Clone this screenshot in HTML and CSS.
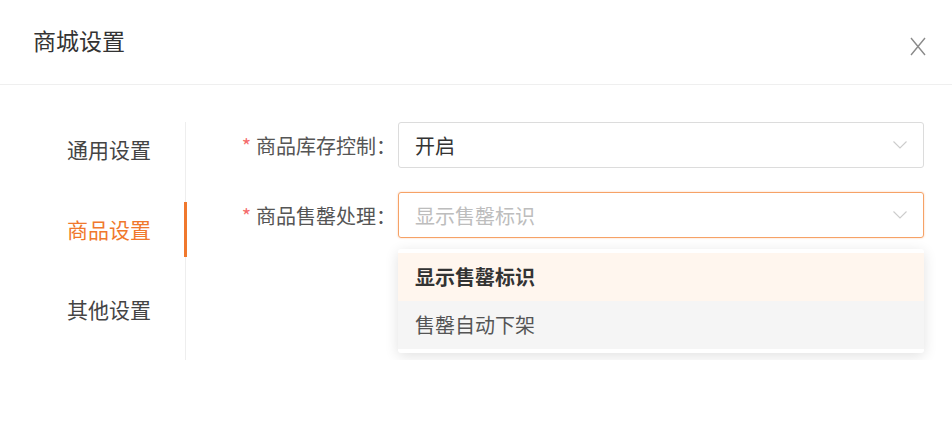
FILE: index.html
```html
<!DOCTYPE html>
<html lang="zh-CN">
<head>
    <meta charset="UTF-8">
    <meta name="viewport" content="width=device-width, initial-scale=1.0">
    <title>商城设置</title>
    <link rel="stylesheet" href="styles.css">
</head>
<body>
    <div class="dialog">
        <!-- Header -->
        <div class="dialog-header">
            <span class="dialog-title">商城设置</span>
            <button class="dialog-close" aria-label="关闭">
                <svg width="18" height="19" viewBox="0 0 18 19">
                    <path d="M2 1 L16 18 M16 1 L2 18" stroke="#8a8a8a" stroke-width="1.4" fill="none" />
                </svg>
            </button>
        </div>

        <div class="dialog-body">
            <!-- Side nav -->
            <ul class="side-nav">
                <li class="nav-item">通用设置</li>
                <li class="nav-item active">商品设置</li>
                <li class="nav-item">其他设置</li>
            </ul>

            <!-- Form -->
            <div class="form">
                <div class="form-row">
                    <label class="form-label"><span class="required">*</span>商品库存控制：</label>
                    <div class="select">
                        <div class="select-input">
                            <span class="select-value">开启</span>
                            <svg class="select-arrow" width="16" height="10" viewBox="0 0 16 10">
                                <path d="M1.5 1.5 L8 8 L14.5 1.5" stroke="#cccccc" stroke-width="1.1" fill="none" />
                            </svg>
                        </div>
                    </div>
                </div>

                <div class="form-row">
                    <label class="form-label"><span class="required">*</span>商品售罄处理：</label>
                    <div class="select open">
                        <div class="select-input">
                            <span class="select-placeholder">显示售罄标识</span>
                            <svg class="select-arrow" width="16" height="10" viewBox="0 0 16 10">
                                <path d="M1.5 1.5 L8 8 L14.5 1.5" stroke="#cccccc" stroke-width="1.1" fill="none" />
                            </svg>
                        </div>
                        <ul class="select-dropdown">
                            <li class="option selected">显示售罄标识</li>
                            <li class="option hover">售罄自动下架</li>
                        </ul>
                    </div>
                </div>
            </div>
        </div>
    </div>
</body>
</html>
```

FILE: styles.css
```css
body {
    margin: 0;
    background-color: #ffffff;
    font-family: "Noto Sans CJK SC", "Noto Sans", sans-serif;
    color: #333333;
}

ul {
    list-style: none;
    margin: 0;
    padding: 0;
}

.dialog-header {
    height: 84px;
    border-bottom: 1px solid #efefef;
    display: flex;
    align-items: center;
    justify-content: space-between;
    padding: 0 25px 0 33px;
}

.dialog-title {
    font-size: 23px;
    color: #333333;
    margin-top: -4px;
}

.dialog-close {
    border: none;
    background: none;
    padding: 0;
    margin-top: 8px;
    display: flex;
    cursor: pointer;
}

.dialog-body {
    display: flex;
    padding-top: 37px;
}

/* left navigation */
.side-nav {
    width: 186px;
    box-sizing: border-box;
    border-right: 1px solid #eeeeee;
    padding-bottom: 23px;
}

.nav-item {
    position: relative;
    height: 55px;
    line-height: 55px;
    margin-bottom: 25px;
    padding-left: 67px;
    font-size: 21px;
    color: #444444;
}

.nav-item:last-child {
    margin-bottom: 0;
}

.nav-item.active {
    color: #f0782d;
}

.nav-item.active::after {
    content: '';
    position: absolute;
    top: 0;
    right: -2px;
    width: 3px;
    height: 100%;
    background-color: #f0782d;
}

/* form */
.form {
    flex: 1;
    padding-right: 28px;
}

.form-row {
    display: flex;
    align-items: center;
    margin-bottom: 24px;
}

.form-label {
    width: 212px;
    box-sizing: border-box;
    text-align: right;
    padding-right: 2px;
    font-size: 20px;
    color: #555555;
}

.required {
    color: #f56c6c;
    margin-right: 5px;
}

.select {
    position: relative;
    flex: 1;
}

.select-input {
    height: 46px;
    box-sizing: border-box;
    border: 1px solid #dcdcdc;
    border-radius: 3px;
    display: flex;
    align-items: center;
    justify-content: space-between;
    padding: 0 15px 0 16px;
    font-size: 20px;
}

.select-value {
    color: #333333;
}

.select-placeholder {
    color: #bdbdbd;
}

.select.open .select-input {
    border-color: #f6a266;
    box-shadow: 0 0 2px rgba(246, 140, 70, 0.45);
}

.select-dropdown {
    position: absolute;
    top: calc(100% + 11px);
    left: 0;
    right: 0;
    padding: 4px 0;
    background-color: #ffffff;
    border-radius: 3px;
    box-shadow: 0 3px 14px rgba(0, 0, 0, 0.12);
}

.option {
    height: 48px;
    line-height: 48px;
    padding-left: 17px;
    font-size: 20px;
    color: #555555;
}

.option.selected {
    background-color: #fff6ee;
    color: #333333;
    font-weight: bold;
}

.option.hover {
    background-color: #f5f5f5;
}
```
